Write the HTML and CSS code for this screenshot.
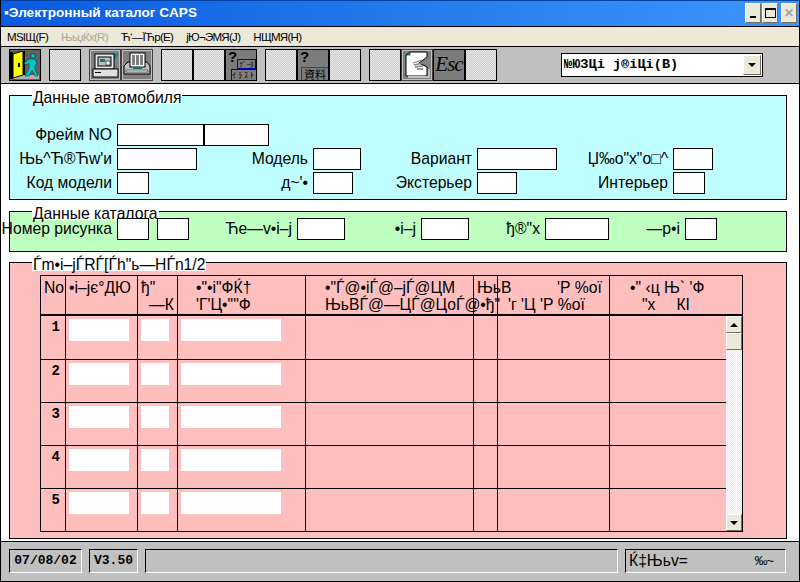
FILE: index.html
```html
<!DOCTYPE html>
<html lang="ru">
<head>
    <meta charset="UTF-8">
    <title>Электронный каталог CAPS</title>
    <link rel="stylesheet" href="styles.css">
</head>
<body>
<div class="window">
    <div class="titlebar">
        <span class="title">▪Электронный каталог CAPS</span>
        <div class="winbtns">
            <span class="winbtn"><i class="min"></i></span>
            <span class="winbtn"><i class="max"></i></span>
            <span class="winbtn close">✕</span>
        </div>
    </div>

    <div class="menubar">
        <span>MЅIЩ(F)</span>
        <span class="disabled">ЊьџЌx(R)</span>
        <span>Ћ‘—ЇЋp(E)</span>
        <span>јЮ¬ЭМЯ(J)</span>
        <span>НЩМЯ(H)</span>
    </div>

    <div class="toolbar">
        <div class="tool dark">
            <svg width="30" height="30" viewBox="0 0 30 30">
                <rect x="0" y="0" width="30" height="30" fill="#606060"/>
                <rect x="1" y="25" width="28" height="4" fill="#b0b0b0"/>
                <path d="M3 4 L13 1 V25 L3 28 Z" fill="#ffff00" stroke="#000"/>
                <path d="M0 2 H3 V29 H0 Z" fill="#000"/>
                <path d="M13 1 H15 V25 H13 Z" fill="#000"/>
                <rect x="8" y="13" width="2" height="4" fill="#000"/>
                <path d="M21 4 h4 v4 h-4 Z M19 9 h6 l2 5 -2 1 v4 l3 7 h-3 l-3 -6 -3 6 h-4 l4 -8 v-5 l-3 2 -2 -2 Z" fill="#00c8c8" stroke="#004040" stroke-width=".6"/>
            </svg>
        </div>
        <div class="gap"></div>
        <div class="tool blank"></div>
        <div class="gap"></div>
        <div class="tool raised">
            <svg width="28" height="28" viewBox="0 0 28 28">
                <path d="M20 3 H27 L24 8 H20 Z" fill="#008080"/>
                <rect x="4" y="3" width="19" height="15" fill="#e8e8e8" stroke="#000"/>
                <rect x="7" y="6" width="13" height="9" fill="#c0c0c0" stroke="#000"/>
                <rect x="9" y="8" width="5" height="3" fill="#008080"/>
                <rect x="15" y="10" width="4" height="4" fill="#fff" stroke="#000" stroke-width=".6"/>
                <rect x="2" y="18" width="25" height="8" fill="#e0e0e0" stroke="#000"/>
                <rect x="4" y="21" width="6" height="1" fill="#000"/>
            </svg>
        </div>
        <div class="tool raised">
            <svg width="28" height="28" viewBox="0 0 28 28">
                <path d="M1 15 L5 11 H24 L27 15 V23 H1 Z" fill="#c0c0c0" stroke="#000"/>
                <rect x="7" y="2" width="15" height="14" fill="#fff" stroke="#000"/>
                <path d="M9 5 H20 M9 7 H20 M9 9 H20 M9 11 H20 M9 13 H20" stroke="#000" stroke-dasharray="3 1"/>
                <rect x="10" y="16" width="9" height="2" fill="#008080"/>
                <rect x="3" y="19" width="22" height="2" fill="#e8e8e8" stroke="#000" stroke-width=".5"/>
            </svg>
        </div>
        <div class="gap"></div>
        <div class="tool blank"></div>
        <div class="tool blank"></div>
        <div class="tool dark help">
            <span class="q">?</span>
            <span class="tag tag-a">ﾃﾞｰﾀ</span>
            <span class="tag tag-b">ｲﾗｽﾄ</span>
        </div>
        <div class="gap"></div>
        <div class="tool blank"></div>
        <div class="tool dark help">
            <span class="q">?</span>
            <span class="tag tag-c">資料</span>
        </div>
        <div class="tool blank"></div>
        <div class="gap"></div>
        <div class="tool blank"></div>
        <div class="tool raised">
            <svg width="28" height="28" viewBox="0 0 28 28">
                <path d="M3 4 L7 1 H24 V6 L16 12 L24 16 V25 H3 Z" fill="#fff" stroke="#000"/>
                <path d="M3 4 L7 1 V4 Z" fill="#00c8c8" stroke="#000" stroke-width=".6"/>
                <path d="M10 12 L19 9 M11 14 L20 12 M12 16 L20 15 M14 18 L20 18" stroke="#808080" stroke-width="1.3"/>
                <path d="M5 26 H26 V18" fill="none" stroke="#c0c0c0" stroke-width="2"/>
            </svg>
        </div>
        <div class="tool dark esc">Esc</div>
        <div class="tool blank"></div>
        <div class="combo">
            <span class="combo-text">№ЮЗЦі ј®іЦі(B)</span>
            <span class="combo-btn"><i class="arrow-down"></i></span>
        </div>
    </div>

    <div class="content">
        <section class="panel blue">
            <h2 class="legend">Данные автомобиля</h2>
            <div class="form car-form">
                <label>Фрейм NO</label>
                <div class="frame-pair">
                    <input class="field w88"><input class="field w64">
                </div>
                <label>Њь^Ћ®Ћw'и</label>
                <input class="field w80">
                <label>Модель</label>
                <input class="field w48">
                <label>Вариант</label>
                <input class="field w80">
                <label>Џ‰о"х"о□^</label>
                <input class="field w40">
                <label>Код модели</label>
                <input class="field w32">
                <label>д~'•</label>
                <input class="field w40">
                <label>Экстерьер</label>
                <input class="field w40">
                <label>Интерьер</label>
                <input class="field w32">
            </div>
        </section>

        <section class="panel green">
            <h2 class="legend">Данные каталога</h2>
            <div class="form cat-form">
                <label>Номер рисунка</label>
                <input class="field">
                <span></span>
                <input class="field">
                <label>Ће—v•i–j</label>
                <input class="field">
                <label>•i–j</label>
                <input class="field">
                <label>ђ®"х</label>
                <input class="field">
                <label>—p•i</label>
                <input class="field">
            </div>
        </section>

        <section class="panel pink">
            <h2 class="legend">Ѓm•i–jЃRЃ[Ѓh"ь—НЃn1/2</h2>
            <div class="parts">
                <div class="cols head">
                    <div class="cell">No</div>
                    <div class="cell">•i–jє°ДЮ</div>
                    <div class="cell">ђ"<br><span class="in-k">—К</span></div>
                    <div class="cell h-qty">•"•i"ФЌ†<br>'Г'Ц•""Ф</div>
                    <div class="cell h-name">•"Ѓ@•iЃ@–jЃ@ЦМ<br>ЊьВЃ@—ЦЃ@ЦоЃ@•ђ"</div>
                    <div class="cell">ЊьВ</div>
                    <div class="cell h-alt"><span class="in-p">'Р %oï</span><br>'г 'Ц 'Р %oï</div>
                    <div class="cell h-end">•" ‹ц Њ` 'Ф<br><span class="in-x">"х</span><span class="in-kl">КІ</span></div>
                </div>
                <div class="parts-body">
                    <div class="rows">
                        <div class="cols row">
                            <div class="cell num">1</div>
                            <div class="cell"><span class="box"></span></div>
                            <div class="cell"><span class="box"></span></div>
                            <div class="cell"><span class="box"></span></div>
                            <div class="cell"></div><div class="cell"></div><div class="cell"></div><div class="cell"></div>
                        </div>
                        <div class="cols row">
                            <div class="cell num">2</div>
                            <div class="cell"><span class="box"></span></div>
                            <div class="cell"><span class="box"></span></div>
                            <div class="cell"><span class="box"></span></div>
                            <div class="cell"></div><div class="cell"></div><div class="cell"></div><div class="cell"></div>
                        </div>
                        <div class="cols row">
                            <div class="cell num">3</div>
                            <div class="cell"><span class="box"></span></div>
                            <div class="cell"><span class="box"></span></div>
                            <div class="cell"><span class="box"></span></div>
                            <div class="cell"></div><div class="cell"></div><div class="cell"></div><div class="cell"></div>
                        </div>
                        <div class="cols row">
                            <div class="cell num">4</div>
                            <div class="cell"><span class="box"></span></div>
                            <div class="cell"><span class="box"></span></div>
                            <div class="cell"><span class="box"></span></div>
                            <div class="cell"></div><div class="cell"></div><div class="cell"></div><div class="cell"></div>
                        </div>
                        <div class="cols row">
                            <div class="cell num">5</div>
                            <div class="cell"><span class="box"></span></div>
                            <div class="cell"><span class="box"></span></div>
                            <div class="cell"><span class="box"></span></div>
                            <div class="cell"></div><div class="cell"></div><div class="cell"></div><div class="cell"></div>
                        </div>
                    </div>
                    <div class="scrollbar">
                        <span class="sb-btn"><i class="arrow-up"></i></span>
                        <span class="sb-btn"></span>
                        <span class="sb-track"></span>
                        <span class="sb-btn"><i class="arrow-down"></i></span>
                    </div>
                </div>
            </div>
        </section>
    </div>

    <div class="statusbar">
        <div class="stat s-date">07/08/02</div>
        <div class="stat s-ver">V3.50</div>
        <div class="stat s-msg"></div>
        <div class="stat s-mode"><span>Ќ‡Њьv=</span><span class="s-unit">‰~</span></div>
    </div>
</div>
</body>
</html>
```

FILE: styles.css
```css
* {
    box-sizing: border-box;
}
body {
    margin: 0;
    font-family: "Liberation Sans", Arial, sans-serif;
    font-size: 15.7px;
    color: #000;
}
.window {
    width: 800px;
    height: 582px;
    display: flex;
    flex-direction: column;
    border-left: 1px solid #000;
    border-right: 1px solid #000;
    border-bottom: 1px solid #000;
    overflow: hidden;
}

/* title bar */
.titlebar {
    height: 27px;
    flex: none;
    display: flex;
    align-items: center;
    justify-content: space-between;
    padding: 0 2px 2px 3px;
    background: linear-gradient(90deg, #0a5be0 0%, #2a80ee 60%, #3e95ff 100%);
    border-top: 1px solid #0040a0;
    border-bottom: 1px solid #000;
}
.title {
    color: #fff;
    font-weight: bold;
    font-size: 13.6px;
    white-space: nowrap;
}
.winbtns {
    display: flex;
    gap: 1px;
}
.winbtn {
    width: 16px;
    height: 20px;
    display: flex;
    align-items: center;
    justify-content: center;
    background: #ece9d8;
    border-top: 1px solid #fff;
    border-left: 1px solid #fff;
    border-right: 1px solid #716f64;
    border-bottom: 1px solid #716f64;
}
.winbtn.close {
    margin-left: 2px;
    color: #a5a292;
    font-size: 12px;
    font-weight: bold;
}
.min {
    width: 6px;
    height: 2px;
    background: #000;
    margin-top: 8px;
}
.max {
    width: 11px;
    height: 10px;
    border: 1px solid #000;
    border-top-width: 2px;
}

/* menu */
.menubar {
    height: 20px;
    flex: none;
    display: flex;
    align-items: center;
    background: #ece9d8;
    border-bottom: 1px solid #000;
    font-size: 11.5px;
    letter-spacing: -.7px;
    padding-left: 6px;
}
.menubar span {
    margin-right: 13px;
}
.menubar .disabled {
    color: #aca899;
}

/* toolbar */
.toolbar {
    height: 37px;
    flex: none;
    display: flex;
    align-items: center;
    padding: 0 0 1px 8px;
    background: #c0c0c0;
    border-bottom: 1px solid #000;
}
.tool {
    width: 32px;
    height: 32px;
    flex: none;
    border: 1px solid #000;
    display: flex;
    align-items: center;
    justify-content: center;
}
.gap {
    width: 8px;
    flex: none;
}
.tool.blank {
    background: repeating-conic-gradient(#c8c8c8 0 25%, #ececec 0 50%) 0 0 / 2px 2px;
}
.tool.dark {
    background: #7c7c7c;
}
.tool.raised {
    background: #808080;
    border: 1px solid #404040;
    outline: 1px solid #c0c0c0;
    outline-offset: -2px;
}
.help {
    position: relative;
    display: block;
}
.q {
    position: absolute;
    left: 2px;
    top: -2px;
    font-size: 15px;
    line-height: 17px;
    font-weight: bold;
}
.tag {
    position: absolute;
    font-family: "Noto Sans CJK JP", sans-serif;
    white-space: nowrap;
    text-align: center;
    color: #000;
}
.tag-a {
    left: 11px;
    top: 9px;
    width: 19px;
    height: 10px;
    font-size: 7px;
    line-height: 8px;
    border: 1px solid #0000c0;
}
.tag-b {
    left: 5px;
    top: 19px;
    width: 25px;
    height: 11px;
    font-size: 8px;
    line-height: 10px;
    letter-spacing: 2px;
    border: 1px solid #0000c0;
    border-right: none;
    border-bottom: none;
}
.tag-c {
    left: 3px;
    top: 17px;
    width: 27px;
    height: 13px;
    font-size: 11px;
    line-height: 12px;
    border: 1px solid #e00000;
    border-right: none;
    border-bottom: none;
}
.esc {
    font-family: "Liberation Serif", serif;
    font-style: italic;
    font-size: 21px;
    letter-spacing: -1px;
}
.combo {
    width: 202px;
    height: 24px;
    margin-left: 64px;
    flex: none;
    display: flex;
    align-items: center;
    justify-content: space-between;
    padding: 1px;
    background: #fff;
    border: 1px solid #000;
}
.combo-text {
    font-family: "Liberation Mono", monospace;
    font-weight: bold;
    font-size: 13.6px;
    padding-left: 1px;
    white-space: pre;
}
.combo-btn, .sb-btn {
    display: flex;
    align-items: center;
    justify-content: center;
    background: #ece9d8;
    border-top: 1px solid #fff;
    border-left: 1px solid #fff;
    border-right: 1px solid #716f64;
    border-bottom: 1px solid #716f64;
}
.combo-btn {
    width: 18px;
    height: 20px;
}
.arrow-down, .arrow-up {
    width: 0;
    height: 0;
    border-left: 4px solid transparent;
    border-right: 4px solid transparent;
}
.arrow-down {
    border-top: 4px solid #000;
}
.arrow-up {
    border-bottom: 4px solid #000;
}

/* panels */
.content {
    flex: 1;
    background: #fff;
    padding: 11px 12px 3px 8px;
    display: flex;
    flex-direction: column;
    min-height: 0;
}
.panel {
    border: 1px solid #000;
    flex: none;
}
.panel.blue {
    background: #bfffff;
    height: 105px;
}
.panel.green {
    background: #bfffbf;
    height: 41px;
    margin-top: 11px;
}
.panel.pink {
    background: #ffbfbf;
    height: 277px;
    margin-top: 10px;
}
.legend {
    width: fit-content;
    height: 13px;
    margin: -5px 0 0 22px;
    padding: 0 1px;
    background: #fff;
    font-size: inherit;
    font-weight: normal;
    line-height: 13px;
    white-space: nowrap;
}
.form {
    display: grid;
    align-items: center;
}
.form label {
    display: flex;
    justify-content: flex-end;
    white-space: nowrap;
    padding-right: 5px;
}
.field {
    display: block;
    height: 22px;
    width: 100%;
    padding: 0;
    border: 1px solid #000;
    border-radius: 0;
    background: #fff;
}
.car-form {
    grid-template-columns: 107px 80px 116px 48px 116px 80px 116px 40px;
    grid-auto-rows: 22px;
    row-gap: 2px;
    margin-top: 20px;
}
.frame-pair {
    grid-column: span 7;
    display: flex;
}
.field.w88 { width: 88px; border-right-width: 2px; }
.field.w64 { width: 64px; border-left: none; }
.field.w80 { width: 80px; }
.field.w48 { width: 48px; }
.field.w40 { width: 40px; }
.field.w32 { width: 32px; }
.cat-form {
    grid-template-columns: 107px 32px 8px 32px 108px 48px 76px 48px 76px 64px 76px 32px;
    height: 22px;
    margin-top: -2px;
}

/* parts table */
.parts {
    width: 703px;
    margin: 4px 0 0 30px;
    border-top: 1px solid #000;
}
.cols {
    display: grid;
    grid-template-columns: 25px 72px 40px 128px 168px 24px 112px 1fr;
    border-left: 1px solid #000;
}
.head {
    height: 40px;
    border-right: 1px solid #000;
    border-bottom: 2px solid #000;
    line-height: 17px;
    white-space: nowrap;
}
.cell {
    border-right: 1px solid #000;
    padding: 3px 0 0 3px;
    min-width: 0;
}
.cell:last-child {
    border-right: none;
}
.h-qty { padding-left: 18px; }
.h-name { padding-left: 19px; }
.h-alt { padding-left: 10px; }
.h-end { padding-left: 20px; }
.in-k { padding-left: 8px; }
.in-p { padding-left: 49px; }
.in-x { padding-left: 12px; }
.in-kl { padding-left: 21px; }
.parts-body {
    display: flex;
    align-items: stretch;
}
.rows {
    flex: 1;
    min-width: 0;
}
.row {
    height: 43px;
    border-bottom: 1px solid #000;
}
.row:first-child {
    height: 44px;
}
.cell.num {
    padding: 3px 5px 0 0;
    text-align: right;
    font-family: "Liberation Mono", monospace;
    font-weight: bold;
    font-size: 14px;
}
.box {
    display: block;
    height: 22px;
    background: #fff;
    margin-right: 8px;
}
.row .cell:nth-child(4) .box {
    margin-right: 24px;
}
.scrollbar {
    width: 17px;
    flex: none;
    display: flex;
    flex-direction: column;
    border-right: 1px solid #000;
    border-bottom: 1px solid #000;
}
.sb-btn {
    height: 17px;
    flex: none;
}
.sb-track {
    flex: 1;
    background: repeating-conic-gradient(#ece9d8 0 25%, #fff 0 50%) 0 0 / 2px 2px;
}

/* status bar */
.statusbar {
    height: 40px;
    flex: none;
    display: flex;
    align-items: center;
    padding: 0 0 2px 8px;
    background: #c0c0c0;
    border-top: 1px solid #000;
}
.stat {
    height: 24px;
    flex: none;
    display: flex;
    align-items: center;
    border-top: 1px solid #000;
    border-left: 1px solid #000;
    border-bottom: 1px solid #fff;
    border-right: 1px solid #fff;
    font-family: "Liberation Mono", monospace;
    font-weight: bold;
    font-size: 13px;
    justify-content: center;
}
.s-date { width: 73px; }
.s-ver { width: 49px; margin-left: 7px; }
.s-msg { width: 473px; margin-left: 7px; }
.s-mode {
    width: 161px;
    margin-left: 7px;
    justify-content: space-between;
    padding: 0 12px 0 3px;
    font-family: "Liberation Sans", sans-serif;
    font-weight: normal;
    font-size: 15.7px;
}
.s-unit {
    font-size: 13px;
    letter-spacing: -1px;
}
```
